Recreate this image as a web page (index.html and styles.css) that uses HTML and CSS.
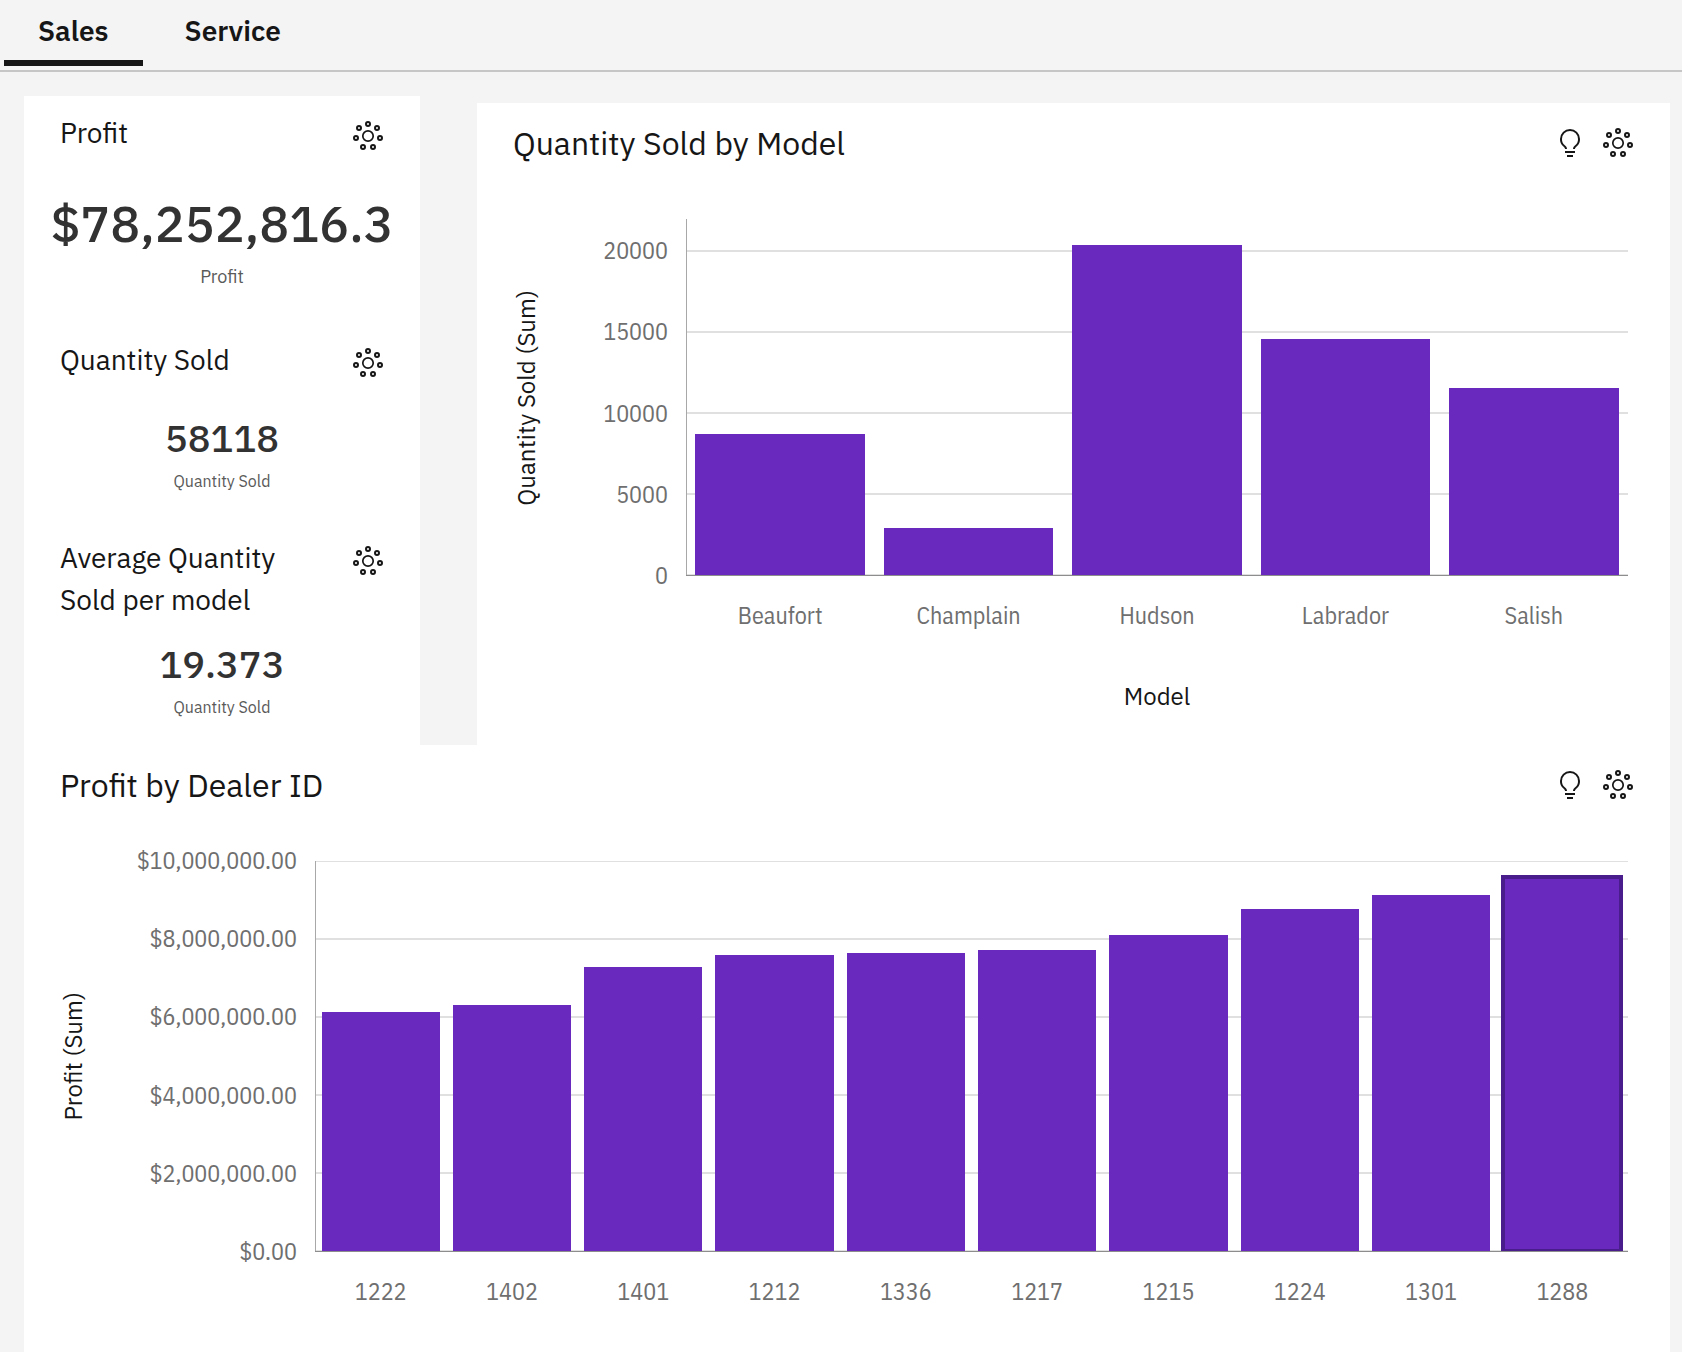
FILE: index.html
```html
<!DOCTYPE html>
<html lang="en">
<head>
<meta charset="utf-8">
<meta name="viewport" content="width=device-width, initial-scale=1">
<title>Sales dashboard</title>
<link rel="stylesheet" href="styles.css">
</head>
<body>
<svg class="sprite" aria-hidden="true">
  <symbol id="icon-explore" viewBox="0 0 32 32">
    <g fill="none" stroke="currentColor">
      <circle cx="16" cy="16" r="5.2" stroke-width="1.7"/>
      <g stroke-width="2">
        <circle cx="16" cy="4" r="2"/>
        <circle cx="7" cy="8" r="2"/>
        <circle cx="25" cy="8" r="2"/>
        <circle cx="4" cy="18" r="2"/>
        <circle cx="28" cy="18" r="2"/>
        <circle cx="11" cy="27" r="2"/>
        <circle cx="21" cy="27" r="2"/>
      </g>
    </g>
  </symbol>
  <symbol id="icon-idea" viewBox="0 0 32 32">
    <path fill="currentColor" d="M11 24h10v2H11zM13 28h6v2h-6zM16 2A10 10 0 0 0 6 12a9.19 9.19 0 0 0 3.46 7.62c1 .93 1.54 1.46 1.54 2.38h2c0-1.84-1.11-2.87-2.19-3.86A7.2 7.2 0 0 1 8 12a8 8 0 0 1 16 0 7.2 7.2 0 0 1-2.82 6.14c-1.07 1-2.18 2-2.18 3.86h2c0-.92.53-1.45 1.54-2.39A9.18 9.18 0 0 0 26 12 10 10 0 0 0 16 2Z"/>
  </symbol>
</svg>

<div class="page">
  <div class="tabs" role="tablist">
    <button class="tab tab-selected" type="button" role="tab" aria-selected="true">Sales</button>
    <button class="tab" type="button" role="tab" aria-selected="false">Service</button>
  </div>

  <main class="dashboard">
    <div class="top-row">
      <div class="kpis">
        <section class="kpi kpi-large">
          <header class="kpi-header">
            <h2 class="kpi-title">Profit</h2>
            <button class="icon-button" type="button" aria-label="Explore"><svg class="icon"><use href="#icon-explore"/></svg></button>
          </header>
          <p class="kpi-value">$78,252,816.3</p>
          <p class="kpi-label">Profit</p>
        </section>
        <section class="kpi">
          <header class="kpi-header">
            <h2 class="kpi-title">Quantity Sold</h2>
            <button class="icon-button" type="button" aria-label="Explore"><svg class="icon"><use href="#icon-explore"/></svg></button>
          </header>
          <p class="kpi-value">58118</p>
          <p class="kpi-label">Quantity Sold</p>
        </section>
        <section class="kpi kpi-compact">
          <header class="kpi-header">
            <h2 class="kpi-title">Average Quantity Sold per model</h2>
            <button class="icon-button" type="button" aria-label="Explore"><svg class="icon"><use href="#icon-explore"/></svg></button>
          </header>
          <p class="kpi-value">19.373</p>
          <p class="kpi-label">Quantity Sold</p>
        </section>
      </div>

      <section class="chart-card chart-card-model">
        <header class="chart-header">
          <h2 class="chart-title">Quantity Sold by Model</h2>
          <button class="icon-button" type="button" aria-label="Insights"><svg class="icon"><use href="#icon-idea"/></svg></button>
          <button class="icon-button" type="button" aria-label="Explore"><svg class="icon"><use href="#icon-explore"/></svg></button>
        </header>
        <div class="chart chart-model">
          <div class="y-title"><span class="y-title-text">Quantity Sold (Sum)</span></div>
          <div class="y-ticks">
            <span>20000</span><span>15000</span><span>10000</span><span>5000</span><span>0</span>
          </div>
          <div class="plot">
            <div class="slot"><div class="bar" style="height:39.7%"></div></div>
            <div class="slot"><div class="bar" style="height:13.2%"></div></div>
            <div class="slot"><div class="bar" style="height:92.6%"></div></div>
            <div class="slot"><div class="bar" style="height:66.3%"></div></div>
            <div class="slot"><div class="bar" style="height:52.5%"></div></div>
          </div>
          <div class="x-labels">
            <span>Beaufort</span><span>Champlain</span><span>Hudson</span><span>Labrador</span><span>Salish</span>
          </div>
          <div class="x-title">Model</div>
        </div>
      </section>
    </div>

    <section class="chart-card">
      <header class="chart-header">
        <h2 class="chart-title">Profit by Dealer ID</h2>
        <button class="icon-button" type="button" aria-label="Insights"><svg class="icon"><use href="#icon-idea"/></svg></button>
        <button class="icon-button" type="button" aria-label="Explore"><svg class="icon"><use href="#icon-explore"/></svg></button>
      </header>
      <div class="chart chart-dealer">
        <div class="y-title"><span class="y-title-text">Profit (Sum)</span></div>
        <div class="y-ticks">
          <span>$10,000,000.00</span><span>$8,000,000.00</span><span>$6,000,000.00</span><span>$4,000,000.00</span><span>$2,000,000.00</span><span>$0.00</span>
        </div>
        <div class="plot">
          <div class="slot"><div class="bar" style="height:61.4%"></div></div>
          <div class="slot"><div class="bar" style="height:63.1%"></div></div>
          <div class="slot"><div class="bar" style="height:72.9%"></div></div>
          <div class="slot"><div class="bar" style="height:75.9%"></div></div>
          <div class="slot"><div class="bar" style="height:76.3%"></div></div>
          <div class="slot"><div class="bar" style="height:77.2%"></div></div>
          <div class="slot"><div class="bar" style="height:81.1%"></div></div>
          <div class="slot"><div class="bar" style="height:87.7%"></div></div>
          <div class="slot"><div class="bar" style="height:91.4%"></div></div>
          <div class="slot"><div class="bar bar-selected" style="height:96.4%"></div></div>
        </div>
        <div class="x-labels">
          <span>1222</span><span>1402</span><span>1401</span><span>1212</span><span>1336</span><span>1217</span><span>1215</span><span>1224</span><span>1301</span><span>1288</span>
        </div>
      </div>
    </section>
  </main>
</div>
</body>
</html>
```
FILE: styles.css
```css
* {
  box-sizing: border-box;
}

body {
  margin: 0;
  background: #fff;
  color: #161616;
  font-family: "IBM Plex Sans", Roboto, sans-serif;
}

h2,
p {
  margin: 0;
  font-weight: 400;
}

button {
  padding: 0;
  border: 0;
  background: none;
  color: inherit;
  font: inherit;
  cursor: pointer;
}

.sprite {
  display: none;
}

.page {
  background: #f4f4f4;
}

/* Tabs */
.tabs {
  display: flex;
  gap: 8px;
  padding: 0 4px 4px;
  border-bottom: 2px solid #c6c6c6;
}

.tab {
  padding: 2px 34px 0;
  border-bottom: 6px solid transparent;
  font-size: 28px;
  font-weight: 600;
  line-height: 58px;
}

.tab-selected {
  border-bottom-color: #161616;
}

/* Dashboard */
.dashboard {
  padding: 24px 12px 0 24px;
}

.top-row {
  display: flex;
  gap: 57px;
}

.icon-button {
  display: block;
  flex: none;
  width: 32px;
  height: 32px;
}

.icon {
  display: block;
  width: 32px;
  height: 32px;
}

/* Key figures */
.kpis {
  flex: none;
  width: 396px;
  background: #fff;
}

.kpi {
  padding: 16px 0 28px;
  text-align: center;
}

.kpi-header {
  display: flex;
  align-items: flex-start;
  justify-content: space-between;
  gap: 40px;
  padding: 0 36px;
  text-align: left;
}

.kpi-header .icon-button {
  margin-top: 8px;
}

.kpi-title {
  font-size: 28px;
  line-height: 42px;
}

.kpi-value {
  margin: 33px 0 7px;
  color: #323232;
  font-size: 38px;
  font-weight: 500;
  line-height: 48px;
}

.kpi-label {
  color: #5a5a5a;
  font-size: 16px;
  line-height: 24px;
}

.kpi-large {
  padding-bottom: 34px;
}

.kpi-large .kpi-value {
  margin: 40px 0 11px;
  font-size: 50px;
  line-height: 60px;
}

.kpi-large .kpi-label {
  font-size: 18px;
}

.kpi-compact {
  padding-bottom: 26px;
}

.kpi-compact .kpi-value {
  margin-top: 19px;
}

/* Charts */
.chart-card {
  padding: 16px 42px 49px 36px;
  background: #fff;
}

.chart-card-model {
  flex: 1;
  min-width: 0;
  margin-top: 7px;
  padding-bottom: 36px;
}

.chart-header {
  display: flex;
  align-items: center;
  gap: 16px;
  height: 48px;
  margin: 0 -6px 52px 0;
}

.chart-title {
  flex: 1;
  font-size: 32px;
  line-height: 48px;
}

.chart {
  display: grid;
  grid-template-columns: 26px var(--tick-width) 1fr;
}

.chart-model {
  --tick-width: 147px;
  --plot-height: 357px;
  --tick-step: 81px;
  --tick-top: 19px;
}

.chart-dealer {
  --tick-width: 229px;
  --plot-height: 391px;
  --tick-step: 78px;
  --tick-top: -13px;
}

.y-title {
  display: flex;
  align-items: center;
  justify-content: center;
}

.y-title-text {
  font-size: 24px;
  line-height: 28px;
  white-space: nowrap;
  writing-mode: vertical-rl;
  transform: rotate(180deg);
}

.y-ticks,
.x-labels {
  color: #6f6f6f;
  font-family: "IBM Plex Sans Condensed", "IBM Plex Sans", Roboto, sans-serif;
  font-size: 24px;
  line-height: 24px;
}

.y-ticks {
  display: flex;
  flex-direction: column;
  align-items: flex-end;
  justify-content: space-between;
  margin: var(--tick-top) 18px -11px 0;
}

.plot {
  display: flex;
  height: var(--plot-height);
  border-bottom: 1px solid #8d8d8d;
  background:
    linear-gradient(#a8a8a8, #a8a8a8) left top / 1px 100% no-repeat,
    linear-gradient(to top, #e0e0e0 2px, transparent 2px) left bottom / 100% var(--tick-step) repeat-y border-box;
}

.slot {
  display: flex;
  flex: 1;
  align-items: flex-end;
  justify-content: center;
}

.bar {
  width: 90%;
  background: #6929be;
}

.bar-selected {
  width: calc(90% + 4px);
  border: solid #491d8b;
  border-width: 4px 4px 2px;
}

.x-labels {
  display: flex;
  grid-column: 3;
  margin-top: 27px;
  text-align: center;
}

.x-labels span {
  flex: 1;
}

.x-title {
  grid-column: 3;
  margin-top: 57px;
  font-size: 24px;
  line-height: 24px;
  text-align: center;
}
```
